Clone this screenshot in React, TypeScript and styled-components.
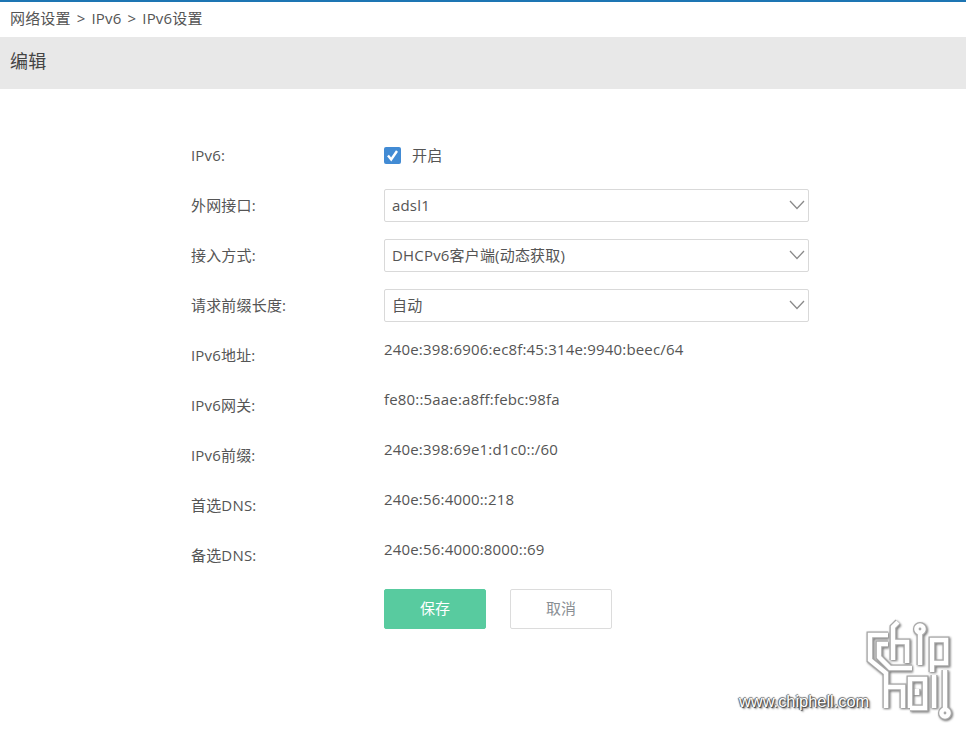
import styled, { createGlobalStyle } from 'styled-components';

const GlobalStyle = createGlobalStyle`
  html, body { margin: 0; padding: 0; background: #fff; }
  body {
    font-family: "Open Sans", "Noto Sans CJK SC", sans-serif;
    font-size: 15px;
    letter-spacing: 0.18px;
    line-height: 20px;
    color: #555;
  }
`;

const Page = styled.div`
  position: relative;
  width: 966px;
  height: 736px;
  overflow: hidden;
  border-top: 2px solid #1d75b3;
  box-sizing: border-box;
`;

const Breadcrumb = styled.div`
  height: 35px;
  padding: 0 0 3px 10px;
  box-sizing: border-box;
  display: flex;
  align-items: center;
  gap: 6px;
`;

const Header = styled.div`
  height: 52px;
  padding: 0 0 5px 10px;
  box-sizing: border-box;
  display: flex;
  align-items: center;
  background: #e8e8e8;
  font-size: 18px;
  color: #444;
`;

const Form = styled.form`
  width: 618px;
  margin: 41px 0 0 191px;
  display: flex;
  flex-direction: column;
`;

const Row = styled.div`
  height: 50px;
  display: grid;
  grid-template-columns: 193px 425px;
  align-items: center;
`;

const Label = styled.label`
  margin-top: -1px;
`;

const Static = styled.div`
  margin-top: -12px;
`;

const CheckWrap = styled.div`
  display: flex;
  align-items: center;
  gap: 11px;
`;

const CheckBox = styled.span`
  width: 17px;
  height: 17px;
  border-radius: 2px;
  background: #428bd4;
  display: flex;
  align-items: center;
  justify-content: center;
`;

const SelectBox = styled.div`
  height: 33px;
  box-sizing: border-box;
  border: 1px solid #d9d9d9;
  border-radius: 2px;
  padding: 0 3px 1px 7px;
  display: flex;
  align-items: center;
  justify-content: space-between;
`;

const Actions = styled.div`
  display: flex;
  gap: 24px;
  margin: 9px 0 0 193px;
`;

const Button = styled.button<{ $primary?: boolean }>`
  width: 102px;
  height: 40px;
  border-radius: 2px;
  border: 1px solid ${p => (p.$primary ? '#58cb9f' : '#dcdcdc')};
  background: ${p => (p.$primary ? '#58cb9f' : '#fff')};
  color: ${p => (p.$primary ? '#fff' : '#8a8f94')};
  font: inherit;
  padding: 0 0 2px;
`;

const Watermark = styled.div`
  position: absolute;
  left: 720px;
  top: 608px;
  width: 246px;
  height: 126px;
`;

const WatermarkText = styled.span`
  position: absolute;
  left: 19px;
  top: 81px;
  font-family: "Liberation Sans", sans-serif;
  font-size: 16.4px;
  letter-spacing: 0;
  color: #fff;
  text-shadow: 1px 1px 1px #333, -1px 0 1px #555, 0 -1px 1px #777, 2px 2px 2px #999;
`;

const LogoSvg = styled.svg`
  position: absolute;
  inset: 0;
  filter: drop-shadow(1.5px 1.5px 1px rgba(0, 0, 0, 0.55));
`;

const LogoEdge = styled.g`
  stroke: #a8a8a8;
  stroke-width: 7;
`;

const LogoCore = styled.g`
  stroke: #fff;
  stroke-width: 4.4;
`;

const fields = [
  { label: '外网接口:', value: 'adsl1' },
  { label: '接入方式:', value: 'DHCPv6客户端(动态获取)' },
  { label: '请求前缀长度:', value: '自动' },
];

const info = [
  { label: 'IPv6地址:', value: '240e:398:6906:ec8f:45:314e:9940:beec/64' },
  { label: 'IPv6网关:', value: 'fe80::5aae:a8ff:febc:98fa' },
  { label: 'IPv6前缀:', value: '240e:398:69e1:d1c0::/60' },
  { label: '首选DNS:', value: '240e:56:4000::218' },
  { label: '备选DNS:', value: '240e:56:4000:8000::69' },
];

const LogoShapes = () => (
  <>
    <path d="M168 25 H150 V50 L166 63 V98 M166 77 H183 V98" />
    <path d="M168 34 H159 V47 L170 58 H192" />
    <path d="M178 12 L173 17 V50 M173 32 H187 V53" />
    <path d="M200 23 V55" />
    <circle cx="200" cy="19" r="3.6" />
    <path d="M212 62 V30 H226 V53 H212" />
    <path d="M190 98 V69 H205 V98 H190" />
    <path d="M197 79 V85" />
    <path d="M214 65 V98" />
    <path d="M225 60 V99" />
    <circle cx="225" cy="103" r="3.6" />
  </>
);

const App = () => (
  <Page>
    <GlobalStyle />
    <Breadcrumb>
      <span>网络设置</span>
      <span>&gt;</span>
      <span>IPv6</span>
      <span>&gt;</span>
      <span>IPv6设置</span>
    </Breadcrumb>
    <Header>编辑</Header>
    <Form>
      <Row>
        <Label>IPv6:</Label>
        <CheckWrap>
          <CheckBox>
            <svg width="13" height="13" viewBox="0 0 13 13" fill="none">
              <path d="M2 6.5 L5.2 10.5 L11 2" stroke="#fff" strokeWidth="2.4" />
            </svg>
          </CheckBox>
          <span>开启</span>
        </CheckWrap>
      </Row>
      {fields.map(f => (
        <Row key={f.label}>
          <Label>{f.label}</Label>
          <SelectBox>
            {f.value}
            <svg width="16" height="10" viewBox="0 0 16 10" fill="none">
              <path d="M1 1 L8 8.5 L15 1" stroke="#8a8a8a" strokeWidth="1.3" />
            </svg>
          </SelectBox>
        </Row>
      ))}
      {info.map(f => (
        <Row key={f.label}>
          <Label>{f.label}</Label>
          <Static>{f.value}</Static>
        </Row>
      ))}
      <Actions>
        <Button type="button" $primary>保存</Button>
        <Button type="button">取消</Button>
      </Actions>
    </Form>
    <Watermark>
      <WatermarkText>www.chiphell.com</WatermarkText>
      <LogoSvg width="246" height="126" viewBox="0 0 246 126" fill="none">
        <LogoEdge><LogoShapes /></LogoEdge>
        <LogoCore><LogoShapes /></LogoCore>
      </LogoSvg>
    </Watermark>
  </Page>
);

export default App;
